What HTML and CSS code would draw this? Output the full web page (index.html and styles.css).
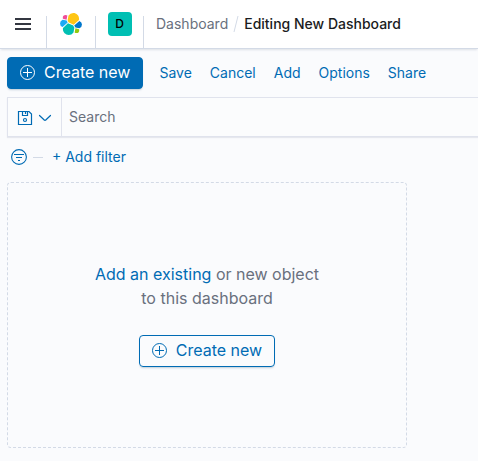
FILE: index.html
```html
<!DOCTYPE html>
<html lang="en">
<head>
<meta charset="utf-8">
<meta name="viewport" content="width=device-width, initial-scale=1">
<title>Editing New Dashboard</title>
<link rel="stylesheet" href="styles.css">
</head>
<body>
<header class="header">
  <div class="header-item header-menu">
    <button class="icon-button" type="button" aria-label="Toggle navigation">
      <svg width="16" height="16" viewBox="0 0 16 16" fill="#343741"><path d="M0 2h16v2H0zM0 7h16v2H0zM0 12h16v2H0z"/></svg>
    </button>
  </div>
  <div class="header-item header-logo">
    <a class="logo" href="#" aria-label="Home">
      <svg width="24" height="24" viewBox="0 0 32 32">
        <path fill="#FEC514" d="M12.58 13.787l7.002 3.211 7.066-6.213a7.849 7.849 0 00.152-1.557c0-4.287-3.462-7.762-7.732-7.762a7.7 7.7 0 00-6.37 3.346l-1.176 6.077 1.058 2.898z"/>
        <path fill="#00BFB3" d="M5.333 21.228A7.964 7.964 0 005.18 22.8c0 4.299 3.473 7.785 7.756 7.785a7.733 7.733 0 006.403-3.381l1.166-6.101-1.556-2.986-7.03-3.215-6.587 6.325z"/>
        <path fill="#F04E98" d="M5.288 9.067l4.8 1.137L11.14 4.73a3.785 3.785 0 00-2.3-.784 3.806 3.806 0 00-3.797 3.812c0 .452.08.893.245 1.309z"/>
        <path fill="#1BA9F5" d="M4.872 10.214a5.294 5.294 0 00-3.493 4.984 5.28 5.28 0 003.392 4.932l6.733-6.11-1.236-2.653-5.396-1.153z"/>
        <path fill="#93C90E" d="M20.873 27.204a3.742 3.742 0 002.285.784 3.806 3.806 0 003.797-3.812c0-.46-.08-.9-.242-1.31l-4.796-1.128-1.044 5.466z"/>
        <path fill="#0077CC" d="M21.848 20.563l5.28 1.237a5.294 5.294 0 003.493-4.985 5.28 5.28 0 00-3.4-4.933l-6.907 6.065 1.534 2.616z"/>
      </svg>
    </a>
  </div>
  <div class="header-item header-space">
    <button class="avatar" type="button" aria-label="Default space">D</button>
  </div>
  <nav class="breadcrumbs" aria-label="Breadcrumbs">
    <a class="breadcrumb" href="#">Dashboard</a>
    <svg class="slash" width="6" height="16" viewBox="0 0 6 16" stroke="#D3DAE6" fill="none"><path d="M1 16L5 0"/></svg>
    <span class="breadcrumb-current">Editing New Dashboard</span>
  </nav>
</header>
<main class="page">
  <div class="toolbar">
    <button class="button button-fill" type="button">
      <svg width="16" height="16" viewBox="0 0 16 16" fill="none" stroke="currentColor"><circle cx="7.5" cy="8.5" r="7"/><path d="M7.5 4v9M3 8.5h9"/></svg>
      Create new
    </button>
    <nav class="actions" aria-label="Dashboard actions">
      <a href="#">Save</a>
      <a href="#">Cancel</a>
      <a href="#">Add</a>
      <a href="#">Options</a>
      <a href="#">Share</a>
    </nav>
  </div>
  <div class="query">
    <button class="saved-query" type="button" aria-label="Saved queries">
      <svg width="16" height="16" viewBox="0 0 16 16" fill="none" stroke="currentColor" stroke-width="1.2"><path d="M1.500 1.500h10.500L14.500 4v10.500h-13zM5.500 1.500v4h5v-4M8.500 2v2"/><circle cx="8" cy="10" r="1.500"/></svg>
      <svg width="16" height="16" viewBox="0 0 16 16" fill="none" stroke="currentColor" stroke-width="1.200" stroke-linecap="round" stroke-linejoin="round"><path d="M2.500 5.500l5 4.700a.7.7 0 001 0l5-4.700"/></svg>
    </button>
    <input class="search" type="text" placeholder="Search" aria-label="Search">
  </div>
  <div class="filters">
    <button class="icon-button filter-button" type="button" aria-label="Change all filters">
      <svg width="16" height="16" viewBox="0 0 16 16" fill="none" stroke="currentColor" stroke-width="1.1"><circle cx="8" cy="8" r="7.400"/><path d="M3 5.500h10M5 8.500h6M7 11.500h2"/></svg>
    </button>
    <span class="filter-line"></span>
    <button class="add-filter" type="button">+ Add filter</button>
  </div>
  <section class="empty-panel">
    <p class="empty-text"><a href="#">Add an existing</a> or new object to this dashboard</p>
    <button class="button button-outline" type="button">
      <svg width="16" height="16" viewBox="0 0 16 16" fill="none" stroke="currentColor"><circle cx="7.5" cy="8.5" r="7"/><path d="M7.5 4v9M3 8.5h9"/></svg>
      Create new
    </button>
  </section>
</main>
</body>
</html>
```
FILE: styles.css
```css
* {
  box-sizing: border-box;
}

body {
  margin: 0;
  background: #fafbfd;
  color: #343741;
  font: 14px/20px Inter, "Liberation Sans", sans-serif;
  overflow-x: hidden;
}

button,
input {
  font: inherit;
}

button {
  padding: 0;
  border: 0;
  background: none;
  color: #006bb4;
  cursor: pointer;
}

a {
  color: #006bb4;
  text-decoration: none;
}

svg {
  display: block;
  flex: none;
}

.header {
  display: flex;
  height: 49px;
  background: #fff;
  border-bottom: 1px solid #d3dae6;
  box-shadow: 0 2px 2px -1px rgba(152, 162, 179, 0.3);
}

.header-item {
  display: flex;
  align-items: center;
  justify-content: center;
  height: 48px;
  padding-right: 1px;
  background: linear-gradient(#d3dae6, #d3dae6) right bottom / 1px 32px no-repeat;
}

.header-menu {
  width: 47px;
}

.header-logo {
  width: 49px;
}

.header-space {
  width: 48px;
}

.avatar {
  width: 24px;
  height: 24px;
  border-radius: 4px;
  background: #00bfb3;
  color: #000;
  font-size: 12px;
  font-weight: 500;
  line-height: 24px;
}

.breadcrumbs {
  display: flex;
  align-items: center;
  gap: 5px;
  padding-left: 12px;
  white-space: nowrap;
}

.breadcrumb {
  color: #69707d;
}

.breadcrumb-current {
  color: #1a1c21;
  font-weight: 500;
}

.page {
  padding: 8px 0 13px 7px;
}

.toolbar {
  display: flex;
  align-items: center;
  gap: 16px;
  margin-bottom: 8px;
}

.button {
  display: flex;
  align-items: center;
  gap: 8px;
  height: 32px;
  padding: 0 12px 2px;
  border: 1px solid #006bb4;
  border-radius: 4px;
  font-size: 16px;
  line-height: 24px;
  box-shadow: 0 2px 2px -1px rgba(54, 97, 126, 0.3);
}

.button-fill {
  background: #006bb4;
  color: #fff;
}

.actions {
  display: flex;
  gap: 18px;
}

.query {
  display: flex;
  height: 40px;
  border: 1px solid #e0e3ed;
  border-right: 0;
  background: #fbfcfd;
  box-shadow: 0 1px 1px rgba(152, 162, 179, 0.2);
}

.saved-query {
  display: flex;
  align-items: center;
  gap: 4px;
  padding: 2px 8px 0 9px;
  border-right: 1px solid #e0e3ed;
}

.search {
  flex: 1;
  min-width: 0;
  padding: 0 7px;
  border: 0;
  background: none;
  color: #343741;
  outline: 0;
}

.search::placeholder {
  color: #69707d;
  opacity: 1;
}

.filters {
  display: flex;
  align-items: center;
  height: 40px;
  padding-left: 4px;
  margin-bottom: 5px;
}

.filter-line {
  width: 10px;
  height: 1px;
  margin: 0 9px 0 6px;
  background: #d3dae6;
}

.empty-panel {
  display: flex;
  flex-direction: column;
  align-items: center;
  max-width: 400px;
  padding: 79px 16px 80px;
  border: 1px dashed #d3dae6;
  border-radius: 4px;
}

.empty-text {
  max-width: 240px;
  margin: 0 0 25px;
  color: #69707d;
  font-size: 16px;
  line-height: 24px;
  text-align: center;
}
```
